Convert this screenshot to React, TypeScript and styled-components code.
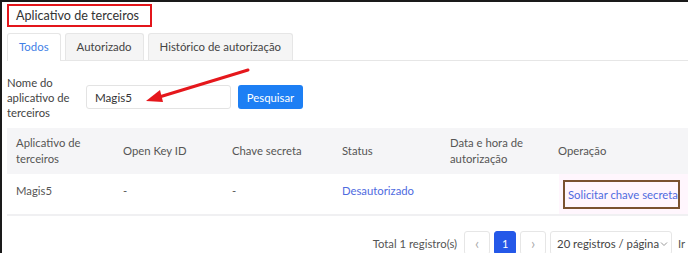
import React, { useState } from "react";
import styled, { createGlobalStyle } from "styled-components";

const Global = createGlobalStyle`
  * { margin: 0; padding: 0; box-sizing: border-box; }
  html, body { width: 688px; height: 253px; overflow: hidden; background: #fff; }
  body {
    font-family: Lato, "Noto Sans", sans-serif;
    font-size: 11.3px;
    color: #333;
  }
`;

const rows = [
  { name: "Magis5", key: "-", secret: "-", status: "Desautorizado", date: "" },
];

export default function App() {
  const [tab, setTab] = useState(0);
  const [query, setQuery] = useState("Magis5");
  const tabs = ["Todos", "Autorizado", "Histórico de autorização"];

  return (
    <>
      <Global />
      <Frame>
        <TitleRow>
          <Title>Aplicativo de terceiros</Title>
        </TitleRow>

        <TabBar>
          {tabs.map((t, i) => (
            <Tab key={t} active={tab === i} onClick={() => setTab(i)}>
              {t}
            </Tab>
          ))}
        </TabBar>

        <SearchRow>
          <Label>Nome do aplicativo de terceiros</Label>
          <InputWrap>
            <Input value={query} onChange={(e) => setQuery(e.target.value)} />
            <Arrow width="110" height="40" viewBox="0 0 110 40">
              <line x1="106" y1="3" x2="14" y2="31" stroke="#e5171c" strokeWidth="3" strokeLinecap="round" />
              <path d="M4 34 L18 23 L21 35 Z" fill="#e5171c" />
            </Arrow>
          </InputWrap>
          <SearchButton>Pesquisar</SearchButton>
        </SearchRow>

        <Table>
          <colgroup>
            <col style={{ width: 107 }} />
            <col style={{ width: 109 }} />
            <col style={{ width: 110 }} />
            <col style={{ width: 108 }} />
            <col style={{ width: 108 }} />
            <col />
          </colgroup>
          <thead>
            <tr>
              <Th>Aplicativo de terceiros</Th>
              <Th>Open Key ID</Th>
              <Th>Chave secreta</Th>
              <Th>Status</Th>
              <Th>Data e hora de autorização</Th>
              <Th>Operação</Th>
            </tr>
          </thead>
          <tbody>
            {rows.map((r) => (
              <tr key={r.name}>
                <Td>{r.name}</Td>
                <Td>{r.key}</Td>
                <Td>{r.secret}</Td>
                <Td>
                  <Link>{r.status}</Link>
                </Td>
                <Td>{r.date}</Td>
                <OpTd>
                  <OpBox>Solicitar chave secreta</OpBox>
                </OpTd>
              </tr>
            ))}
          </tbody>
        </Table>

        <Pager>
          <Total>Total 1 registro(s)</Total>
          <PageBtn>‹</PageBtn>
          <PageBtn current>1</PageBtn>
          <PageBtn>›</PageBtn>
          <SizeSelect>
            20 registros / página
            <Caret width="8" height="6" viewBox="0 0 8 6">
              <path d="M1 1.5 L4 4.5 L7 1.5" fill="none" stroke="#999" strokeWidth="1" />
            </Caret>
          </SizeSelect>
          <Jump>Ir</Jump>
        </Pager>
      </Frame>
    </>
  );
}

const Frame = styled.div`
  width: 688px;
  height: 253px;
  border-top: 2px solid #1a1a1a;
  border-left: 2px solid #1a1a1a;
  padding-left: 5px;
  overflow: hidden;
`;

const TitleRow = styled.div`
  padding-top: 2px;
  height: 31px;
`;

const Title = styled.div`
  display: inline-block;
  border: 2px solid #e3151b;
  padding: 0 11px 0 7px;
  height: 23px;
  line-height: 19px;
  font-size: 12.6px;
  color: #333;
`;

const TabBar = styled.div`
  display: flex;
  gap: 4px;
  border-bottom: 1px solid #e6e6e6;
  height: 28px;
  margin-right: -10px;
`;

const Tab = styled.div<{ active?: boolean }>`
  padding: 0 11px;
  line-height: 26px;
  font-size: 11.4px;
  border: 1px solid #e6e6e6;
  border-bottom: none;
  border-radius: 3px 3px 0 0;
  background: ${(p) => (p.active ? "#fff" : "#f5f5f5")};
  color: ${(p) => (p.active ? "#3f7fe6" : "#444")};
  margin-bottom: ${(p) => (p.active ? "-1px" : "0")};
  height: ${(p) => (p.active ? "28px" : "27px")};
  cursor: pointer;
`;

const SearchRow = styled.div`
  display: flex;
  align-items: center;
  height: 67px;
  padding-top: 5px;
`;

const Label = styled.div`
  width: 79px;
  font-size: 11.3px;
  line-height: 15px;
  color: #444;
`;

const InputWrap = styled.div`
  position: relative;
`;

const Input = styled.input`
  width: 145px;
  height: 24px;
  border: 1px solid #e3e3e3;
  border-radius: 3px;
  padding: 0 8px;
  font-family: inherit;
  font-size: 11.6px;
  color: #333;
  outline: none;
`;

const Arrow = styled.svg`
  position: absolute;
  left: 56px;
  top: -18px;
  pointer-events: none;
`;

const SearchButton = styled.button`
  margin-left: 7px;
  height: 24px;
  width: 65px;
  border: none;
  border-radius: 3px;
  background: #1d7ff4;
  color: #fff;
  font-family: inherit;
  font-size: 11.3px;
`;

const Table = styled.table`
  width: 700px;
  border-collapse: collapse;
  table-layout: fixed;
`;

const Th = styled.th`
  background: #f5f5f7;
  height: 46px;
  padding: 0 9px;
  text-align: left;
  font-weight: normal;
  font-size: 11.3px;
  line-height: 16px;
  color: #555;
  vertical-align: middle;
`;

const Td = styled.td`
  height: 41px;
  padding: 0 9px 8px;
  font-size: 11.3px;
  color: #555;
  border-bottom: 2px solid #f0f0f2;
  vertical-align: middle;
`;

const OpTd = styled(Td)`
  padding: 0 0 0 14px;
  background: linear-gradient(to right, #fff 0, #fff 10px, #fff6fd 10px);
`;

const Link = styled.span`
  color: #4f6bdf;
`;

const OpBox = styled.span`
  display: inline-block;
  border: 2px solid #7a5230;
  padding: 6px 0 6px 3px;
  width: 117px;
  color: #4f6bdf;
  white-space: nowrap;
`;

const Pager = styled.div`
  display: flex;
  align-items: center;
  justify-content: flex-end;
  gap: 4px;
  margin-top: 15px;
  margin-right: -10px;
  height: 24px;
  color: #555;
  font-size: 11.3px;
`;

const Total = styled.span`
  margin-right: 3px;
`;

const PageBtn = styled.div<{ current?: boolean }>`
  height: 24px;
  display: flex;
  align-items: center;
  justify-content: center;
  border: 1px solid ${(p) => (p.current ? "#2458e8" : "#e6e6e6")};
  border-radius: 3px;
  background: ${(p) => (p.current ? "#2458e8" : "#fff")};
  color: ${(p) => (p.current ? "#fff" : "#aaa")};
  font-size: ${(p) => (p.current ? "11px" : "15px")};
  width: ${(p) => (p.current ? "22px" : "26px")};
`;

const SizeSelect = styled.div`
  display: flex;
  align-items: center;
  gap: 1px;
  height: 24px;
  padding: 0 3px 0 6px;
  border: 1px solid #e6e6e6;
  border-radius: 3px;
  color: #444;
  white-space: nowrap;
`;

const Caret = styled.svg`
  margin-top: 2px;
`;

const Jump = styled.span`
  margin-left: 2px;
  width: 20px;
`;
